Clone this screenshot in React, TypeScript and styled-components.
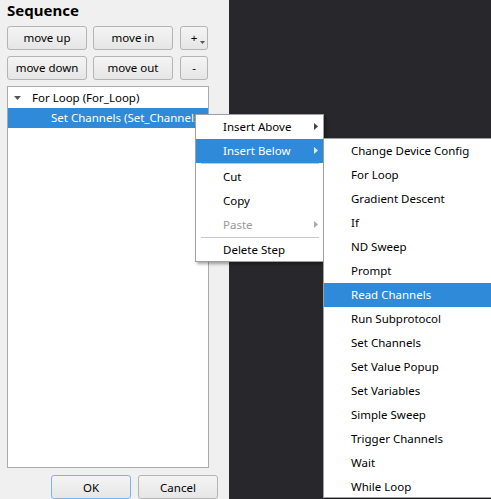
import React from 'react';
import styled, { createGlobalStyle } from 'styled-components';

const Global = createGlobalStyle`
  html, body { margin: 0; padding: 0; overflow: hidden; }
  body {
    width: 491px; height: 499px;
    font-family: 'Noto Sans', 'DejaVu Sans', sans-serif;
    font-size: 11.5px; color: #000;
  }
`;

const Screen = styled.div`
  position: relative;
  width: 491px;
  height: 499px;
  display: flex;
  overflow: hidden;
`;

const Panel = styled.div`
  width: 229px;
  flex: none;
  box-sizing: border-box;
  background: #f0f0f0;
  padding: 0 0 0 7px;
  display: flex;
  flex-direction: column;
`;

const Dark = styled.div`
  flex: 1;
  background: #28282c;
`;

const Title = styled.div`
  font-weight: 700;
  font-size: 15px;
  height: 26px;
  line-height: 21px;
`;

const ButtonGrid = styled.div`
  display: grid;
  grid-template-columns: 80px 80px 29px;
  grid-auto-rows: 24px;
  column-gap: 6px;
  row-gap: 6px;
  width: 202px;
`;

const Btn = styled.button<{ $primary?: boolean; $offset?: number }>`
  position: relative;
  box-sizing: border-box;
  margin: 0 0 0 ${(p) => p.$offset ?? 0}px;
  padding: 0;
  height: 24px;
  border: 1px solid ${(p) => (p.$primary ? '#7fb2e6' : '#b4b4b4')};
  border-radius: 3px;
  background: linear-gradient(#f4f4f4, #e6e6e6);
  font-family: 'Noto Sans', 'DejaVu Sans', sans-serif;
  font-size: 11.5px;
  color: #000;
`;

const DropMark = styled.svg`
  position: absolute;
  right: 2px;
  bottom: 5px;
`;

const Tree = styled.div`
  margin-top: 6px;
  box-sizing: border-box;
  width: 202px;
  height: 385px;
  background: #fff;
  border: 1px solid #ababab;
  padding-top: 1px;
`;

const TreeRow = styled.div<{ $level: number; $selected?: boolean }>`
  height: 20px;
  display: flex;
  align-items: center;
  white-space: nowrap;
  overflow: hidden;
  padding-left: ${(p) => (p.$level === 0 ? 6 : 43)}px;
  background: ${(p) => (p.$selected ? '#308ada' : 'transparent')};
  color: ${(p) => (p.$selected ? '#fff' : '#000')};
`;

const Expander = styled.svg`
  width: 7px;
  height: 4px;
  margin-right: 11px;
`;

const Footer = styled.div`
  display: flex;
  justify-content: flex-end;
  gap: 7px;
  margin-top: 7px;
  padding-right: 11px;
`;

const FooterBtn = styled(Btn)`
  width: 80px;
`;

const Menu = styled.div<{ $left: number; $top: number; $width: number; $height?: number }>`
  position: absolute;
  left: ${(p) => p.$left}px;
  top: ${(p) => p.$top}px;
  width: ${(p) => p.$width}px;
  ${(p) => (p.$height ? `height: ${p.$height}px; overflow: hidden;` : '')}
  box-sizing: border-box;
  background: #fff;
  border: 1px solid #a0a0a0;
  padding: 0;
  box-shadow: 2px 2px 3px rgba(0, 0, 0, 0.35);
`;

const Item = styled.div<{ $active?: boolean; $disabled?: boolean; $last?: boolean }>`
  position: relative;
  height: ${(p) => (p.$last ? 22 : 24)}px;
  display: flex;
  align-items: center;
  padding-left: 27px;
  padding-bottom: 1px;
  box-sizing: border-box;
  white-space: nowrap;
  background: ${(p) => (p.$active ? '#308ada' : 'transparent')};
  color: ${(p) => (p.$active ? '#fff' : p.$disabled ? '#999' : '#000')};
`;

const Arrow = styled.svg`
  position: absolute;
  right: 5px;
  top: 8px;
`;

const Separator = styled.div`
  height: 2px;
  display: flex;
  align-items: flex-start;
  padding: 0 4px 0 5px;
  &::before {
    content: '';
    flex: 1;
    height: 1px;
    background: #c8c8c8;
  }
`;

const SubArrow = ({ color }: { color: string }) => (
  <Arrow width="4" height="7" viewBox="0 0 4 7">
    <path d="M0 0 L4 3.5 L0 7 Z" fill={color} />
  </Arrow>
);

const subItems = [
  'Change Device Config',
  'For Loop',
  'Gradient Descent',
  'If',
  'ND Sweep',
  'Prompt',
  'Read Channels',
  'Run Subprotocol',
  'Set Channels',
  'Set Value Popup',
  'Set Variables',
  'Simple Sweep',
  'Trigger Channels',
  'Wait',
  'While Loop',
];

export default function App() {
  return (
    <>
      <Global />
      <Screen>
        <Panel>
          <Title>Sequence</Title>
          <ButtonGrid>
            <Btn>move up</Btn>
            <Btn>move in</Btn>
            <Btn $offset={1}>
              +
              <DropMark width="5" height="3" viewBox="0 0 5 3">
                <path d="M0 0 H5 L2.5 3 Z" fill="#555" />
              </DropMark>
            </Btn>
            <Btn>move down</Btn>
            <Btn>move out</Btn>
            <Btn $offset={1}>-</Btn>
          </ButtonGrid>
          <Tree>
            <TreeRow $level={0}>
              <Expander viewBox="0 0 7 4">
                <path d="M0 0 H7 L3.5 4 Z" fill="#555" />
              </Expander>
              For Loop (For_Loop)
            </TreeRow>
            <TreeRow $level={1} $selected>
              Set Channels (Set_Channels)
            </TreeRow>
          </Tree>
          <Footer>
            <FooterBtn $primary>OK</FooterBtn>
            <FooterBtn>Cancel</FooterBtn>
          </Footer>
        </Panel>
        <Dark />
        <Menu $left={195} $top={114} $width={129}>
          <Item>
            Insert Above
            <SubArrow color="#444" />
          </Item>
          <Item $active>
            Insert Below
            <SubArrow color="#d8e8f8" />
          </Item>
          <Separator />
          <Item>Cut</Item>
          <Item>Copy</Item>
          <Item $disabled>
            Paste
            <SubArrow color="#aaa" />
          </Item>
          <Separator />
          <Item $last>Delete Step</Item>
        </Menu>
        <Menu $left={323} $top={138} $width={180} $height={360}>
          {subItems.map((s) => (
            <Item key={s} $active={s === 'Read Channels'}>
              {s}
            </Item>
          ))}
        </Menu>
      </Screen>
    </>
  );
}
